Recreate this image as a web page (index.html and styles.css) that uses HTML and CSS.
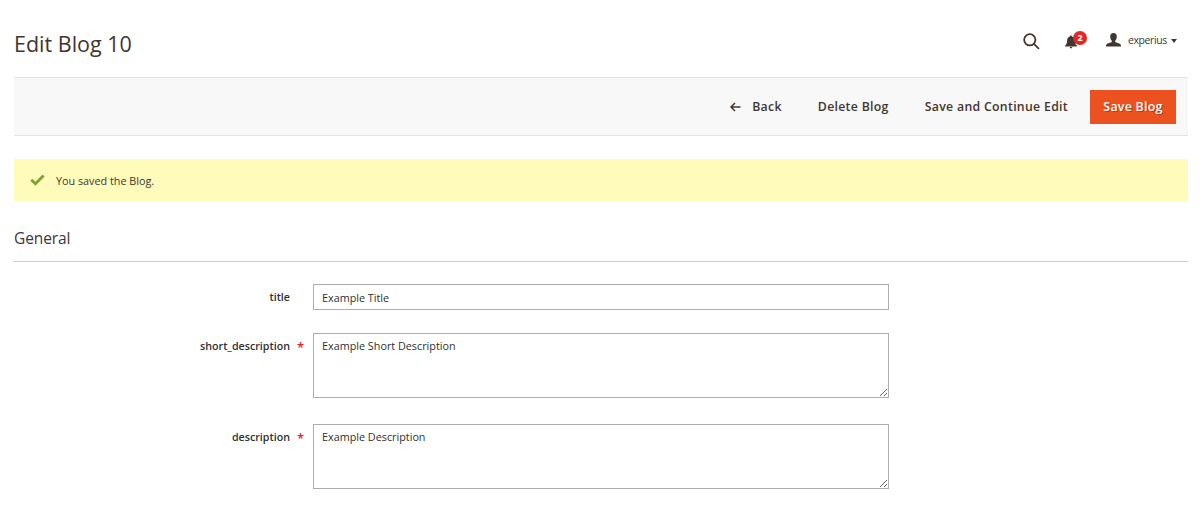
FILE: index.html
```html
<!DOCTYPE html>
<html lang="en">
    <head>
        <meta charset="utf-8">
        <meta name="viewport" content="width=device-width, initial-scale=1">
        <title>Edit Blog 10</title>
        <link rel="stylesheet" href="styles.css">
    </head>
    <body>
        <header class="page-header">
            <h1 class="page-title">Edit Blog 10</h1>
            <div class="header-tools">
                <svg class="icon-search" viewBox="0 0 16 16"><circle cx="6.4" cy="6.4" r="5.3"/><path d="M10.3 10.3L15 15"/></svg>
                <div class="notifications">
                    <svg class="icon-bell" viewBox="0 0 12 14"><path d="M6 0.5C5.3 0.5 5 1 5 1.6C3 2.1 2.2 3.7 2.1 5.5C2 8.1 1.6 9.4 0 10.8V11.4H12V10.8C10.4 9.4 10 8.1 9.9 5.5C9.8 3.7 9 2.1 7 1.6C7 1 6.7 0.5 6 0.5ZM4.7 12.1C4.8 13 5.3 13.4 6 13.4S7.2 13 7.3 12.1Z"/></svg>
                    <span class="badge">2</span>
                </div>
                <div class="user">
                    <svg class="icon-user" viewBox="0 0 15 14"><path d="M7.5 0C5.3 0 4.2 1.4 4.2 3.6C4.2 5.5 4.9 7 5.8 7.7V9.1C4.9 9.8 2.6 10 1.2 10.8C0.3 11.3 0 12 0 13.6H15C15 12 14.7 11.3 13.8 10.8C12.4 10 10.1 9.8 9.2 9.1V7.7C10.1 7 10.8 5.5 10.8 3.6C10.8 1.4 9.7 0 7.5 0Z"/></svg>
                    <span class="user-name">experius</span>
                    <span class="caret"></span>
                </div>
            </div>
        </header>
        <div class="toolbar">
            <button class="btn btn-back" type="button">
                <svg class="icon-back" viewBox="0 0 11 10"><path d="M10.5 5H1.2M5 1L1 5L5 9"/></svg>
                Back
            </button>
            <button class="btn btn-delete" type="button">Delete Blog</button>
            <button class="btn btn-continue" type="button">Save and Continue Edit</button>
            <button class="btn btn-primary" type="button">Save Blog</button>
        </div>
        <div class="message">
            <svg class="icon-check" viewBox="0 0 15 12"><path d="M1.3 5.8L5.4 9.7L13.6 1.5"/></svg>
            <span>You saved the Blog.</span>
        </div>
        <form>
            <h2 class="section-title">General</h2>
            <div class="field">
                <label for="title">title</label>
                <input id="title" type="text" value="Example Title">
            </div>
            <div class="field required">
                <label for="short_description">short_description</label>
                <textarea id="short_description">Example Short Description</textarea>
            </div>
            <div class="field required">
                <label for="description">description</label>
                <textarea id="description">Example Description</textarea>
            </div>
        </form>
    </body>
</html>
```
FILE: styles.css
```css
* {
    box-sizing: border-box;
}
body {
    margin: 0;
    padding: 0 12px 0 14px;
    background: #fff;
    color: #41362f;
    font-family: "Open Sans", sans-serif;
    font-size: 10.8px;
    overflow: hidden;
}
h1, h2 {
    margin: 0;
    font-weight: 400;
}
svg {
    display: block;
    flex: none;
}

/* header */
.page-header {
    display: flex;
    justify-content: space-between;
    height: 77px;
}
.page-title {
    padding-top: 29px;
    font-size: 21.5px;
    line-height: 29px;
}
.header-tools {
    display: flex;
    align-items: center;
    height: 24px;
    margin: 29px 11px 0 0;
}
.icon-search {
    width: 17px;
    height: 17px;
    fill: none;
    stroke: #41362f;
    stroke-width: 1.7;
}
.notifications {
    position: relative;
    margin-left: 25px;
}
.icon-bell {
    width: 12px;
    height: 14px;
    margin-top: 1px;
    fill: #41362f;
}
.badge {
    position: absolute;
    top: -3px;
    left: 8px;
    width: 14px;
    height: 14px;
    border-radius: 50%;
    background: #e22626;
    color: #fff;
    font-size: 9px;
    font-weight: 700;
    line-height: 14px;
    text-align: center;
}
.user {
    display: flex;
    align-items: center;
    margin-left: 29px;
}
.icon-user {
    width: 15px;
    height: 14px;
    margin-top: -2px;
    fill: #41362f;
}
.user-name {
    width: 39px;
    margin: -3px 0 0 7px;
    font-size: 10.5px;
    letter-spacing: -0.4px;
}
.caret {
    margin: 0 0 0 4px;
    border: 3.5px solid transparent;
    border-top: 4px solid #41362f;
    border-bottom: 0;
}

/* buttons bar */
.toolbar {
    display: flex;
    align-items: center;
    justify-content: flex-end;
    height: 59px;
    padding-right: 12px;
    border-top: 1px solid #e3e3e3;
    border-bottom: 1px solid #e3e3e3;
    background: #f8f8f8;
}
.btn {
    display: flex;
    align-items: center;
    height: 34px;
    padding: 0;
    border: 0;
    background: none;
    color: #41362f;
    font-family: inherit;
    font-size: 12.3px;
    font-weight: 600;
    letter-spacing: 0.3px;
}
.btn-delete, .btn-continue {
    margin-left: 36px;
}
.icon-back {
    width: 11px;
    height: 10px;
    margin-right: 11px;
    fill: none;
    stroke: #41362f;
    stroke-width: 1.5;
}
.btn-primary {
    width: 86px;
    margin-left: 22px;
    justify-content: center;
    background: #eb5220;
    color: #fff;
    text-shadow: 1px 1px 0 rgba(0, 0, 0, 0.25);
}

/* success message */
.message {
    display: flex;
    align-items: center;
    height: 42px;
    margin-top: 23px;
    padding-left: 16px;
    background: #fffbbb;
}
.icon-check {
    width: 15px;
    height: 12px;
    margin-right: 11px;
    fill: none;
    stroke: #79a22e;
    stroke-width: 2.8;
}

/* form */
.section-title {
    height: 61px;
    margin-bottom: 22px;
    padding-top: 26px;
    border-bottom: 1px solid #ccc;
    font-size: 15.5px;
    letter-spacing: -0.1px;
    line-height: 22px;
}
.field {
    display: flex;
    align-items: flex-start;
    margin-bottom: 26px;
}
.field:first-of-type {
    margin-bottom: 23px;
}
label {
    position: relative;
    width: 276px;
    margin-right: 23px;
    color: #303030;
    font-weight: 600;
    font-size: 10.7px;
    line-height: 26px;
    text-align: right;
}
.required label::after {
    content: "*";
    position: absolute;
    top: 1px;
    right: -14px;
    color: #e22626;
    font-size: 13px;
}
input, textarea {
    display: block;
    width: 576px;
    margin: 0;
    padding: 0 8px;
    border: 1px solid #adadad;
    border-radius: 0;
    background: #fff;
    color: #303030;
    font-family: inherit;
    font-size: 10.8px;
}
input {
    height: 26px;
}
textarea {
    height: 65px;
    padding-top: 4px;
    line-height: 16px;
}
```
